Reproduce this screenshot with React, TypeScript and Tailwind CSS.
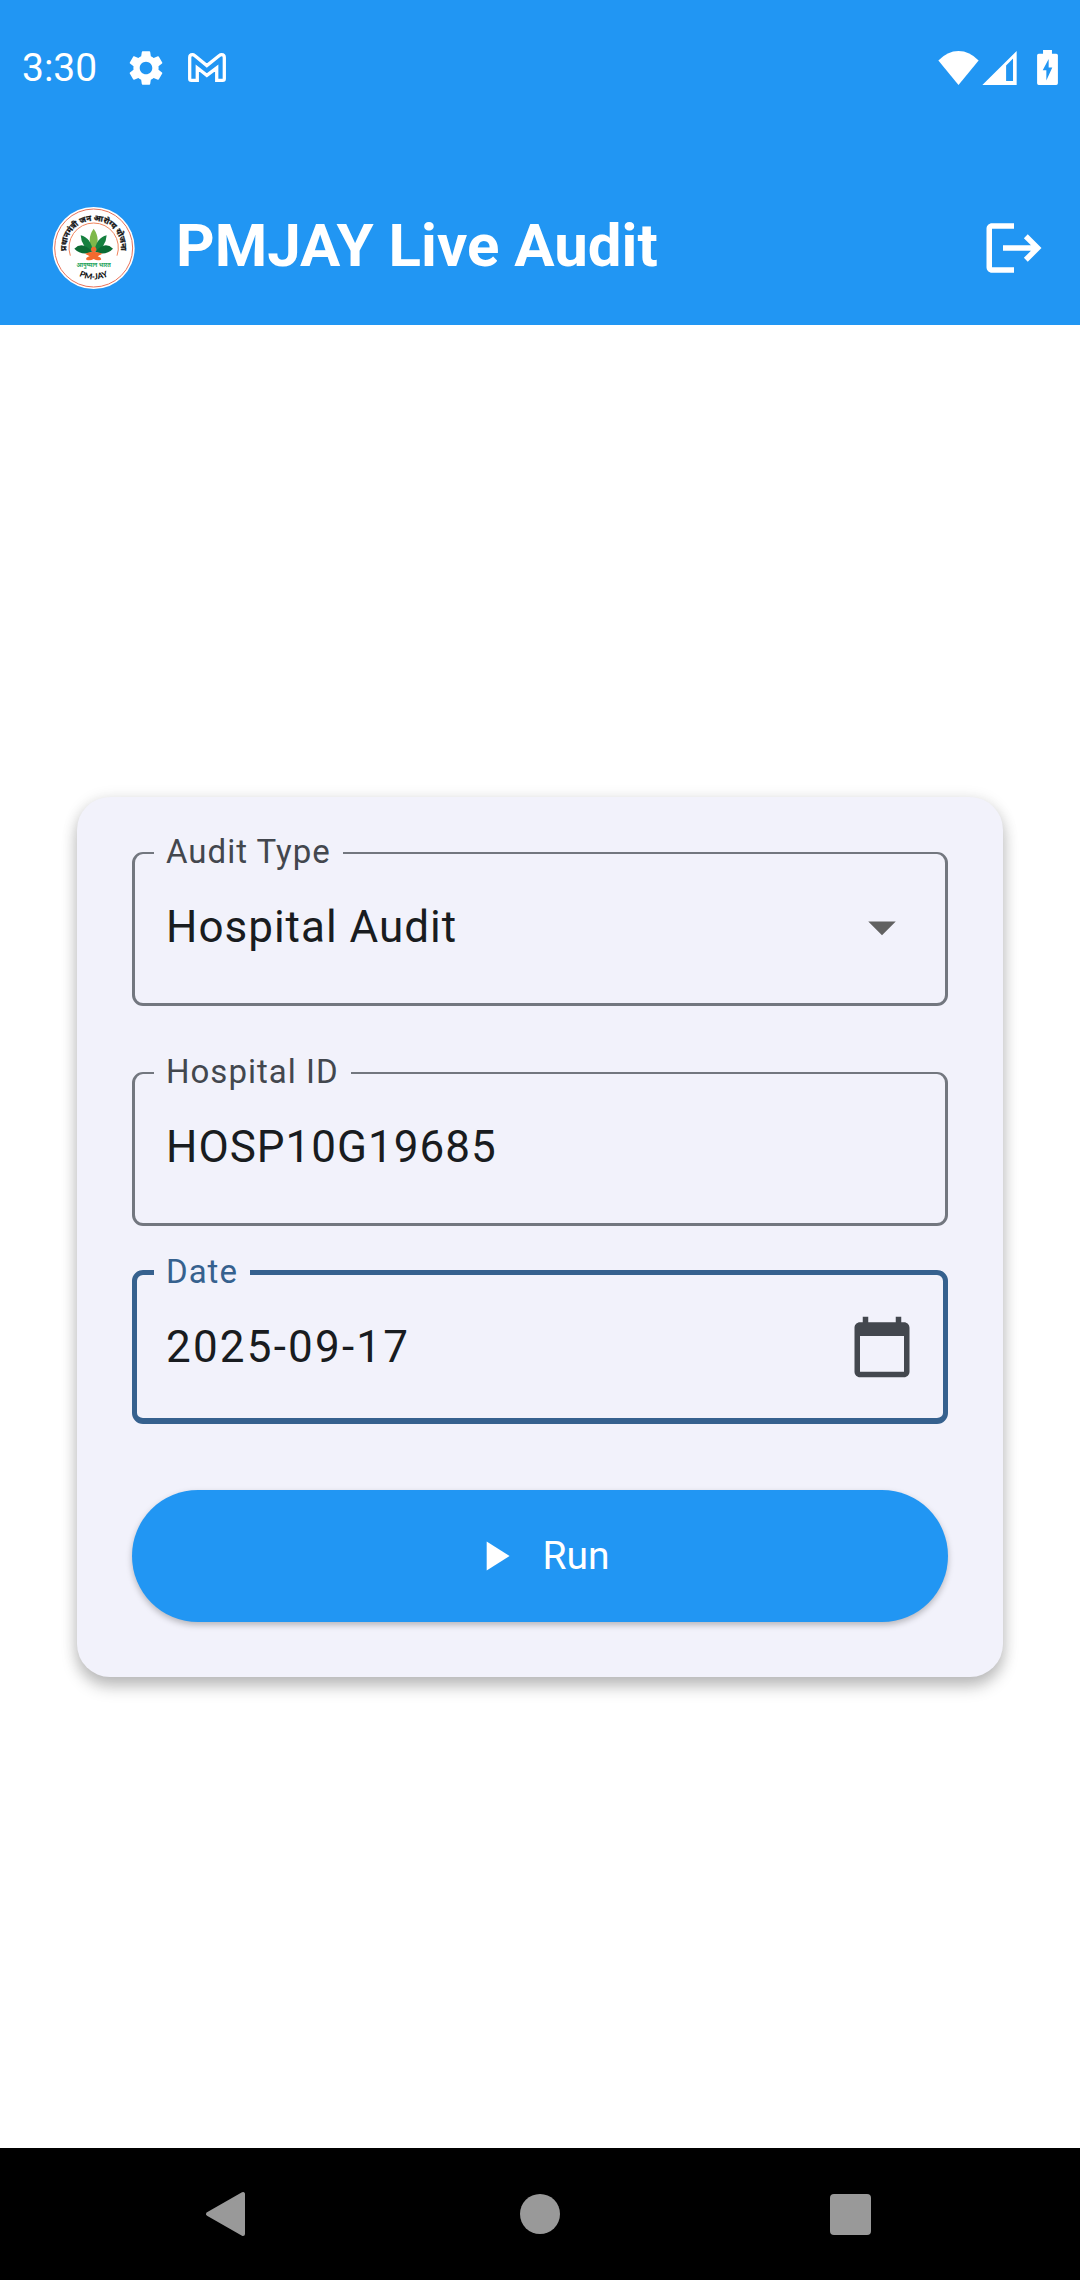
import { useState } from "react";
import type { ReactNode } from "react";
import { MdArrowDropDown, MdCalendarToday, MdLogout, MdPlayArrow, MdSettings } from "react-icons/md";

function GmailIcon() {
  return (
    <svg viewBox="0 0 115 88" className="h-[29px] w-[38px]" fill="none" stroke="currentColor" strokeWidth="10" aria-hidden="true">
      <path d="M5 78V14Q5 5 13 5Q17 5 20 8L57 38L95 8Q98 5 102 5Q110 5 110 14V78Q110 83 105 83H87V45L57 68L28 45V83H10Q5 83 5 78Z" />
    </svg>
  );
}

function WifiIcon() {
  return (
    <svg viewBox="0 0 122 103" className="h-[34px] w-[41px]" fill="currentColor" aria-hidden="true">
      <path d="M61 103L0 29Q27 0 61 0Q95 0 122 29Z" />
    </svg>
  );
}

function SignalIcon() {
  return (
    <svg viewBox="0 0 104 103" className="h-[34px] w-[35px]" fill="currentColor" aria-hidden="true">
      <path fillRule="evenodd" d="M104 0V103H0ZM72 44V91H93V23Z" />
    </svg>
  );
}

function BatteryIcon() {
  return (
    <svg viewBox="0 0 63 106" className="h-[35px] w-[21px]" fill="currentColor" aria-hidden="true">
      <path
        fillRule="evenodd"
        d="M18 0H45V11H58Q63 11 63 16V101Q63 106 58 106H5Q0 106 0 101V16Q0 11 5 11H18ZM35 27L17 61H28V92L46 53H35Z"
      />
    </svg>
  );
}

function PmjayLogo() {
  return (
    <svg viewBox="12 12 297 297" className="size-[99px] shrink-0" role="img" aria-label="PM-JAY">
      <defs>
        <path id="logo-top" d="M84 187A82 82 0 1 1 238 187" />
        <path id="logo-bottom" d="M70 190A97 97 0 0 0 252 190" />
      </defs>
      <circle cx="161" cy="159" r="123" fill="#fff" />
      <circle cx="161" cy="159" r="117" fill="none" stroke="#e8735a" strokeWidth="3" />
      <path d="M91 182A74 74 0 1 1 231 182" fill="none" stroke="#f0845c" strokeWidth="3" />
      <path d="M161 101Q185 135 161 168Q137 135 161 101Z" fill="#7fb84a" />
      <path d="M122 121Q153 128 159 171Q124 158 122 121Z" fill="#15803f" />
      <path d="M200 121Q169 128 163 171Q198 158 200 121Z" fill="#15803f" />
      <path d="M103 161Q128 137 157 171Q124 183 103 161Z" fill="#0b6b34" />
      <path d="M219 161Q194 137 165 171Q198 183 219 161Z" fill="#0b6b34" />
      <circle cx="161" cy="163" r="8" fill="#f26a2e" />
      <path d="M161 171Q176 170 187 176L173 184Q186 188 183 194Q172 199 161 192Q150 199 139 194Q136 188 149 184L135 176Q146 170 161 171Z" fill="#f26a2e" />
      <text x="161" y="217" textAnchor="middle" fontSize="17" fontWeight="700" fill="#1ea35a" fontFamily="'Noto Sans', sans-serif" lang="hi">
        आयुष्मान भारत
      </text>
      <text fontSize="24" fontWeight="700" fill="#151515" stroke="#151515" strokeWidth="1" fontFamily="'Noto Sans', sans-serif" lang="hi" textAnchor="middle">
        <textPath href="#logo-top" startOffset="50%">
          प्रधानमंत्री जन आरोग्य योजना
        </textPath>
      </text>
      <text fontSize="25" fontWeight="900" fill="#151515" fontFamily="Lato, sans-serif" textAnchor="middle">
        <textPath href="#logo-bottom" startOffset="50%">
          PM-JAY
        </textPath>
      </text>
    </svg>
  );
}

function StatusBar() {
  return (
    <div className="flex h-[135px] items-center justify-between px-[22px]">
      <div className="flex items-center">
        <span className="text-[39px] leading-[44px]">3:30</span>
        <MdSettings className="ml-7 size-[42px]" />
        <span className="ml-[21px]">
          <GmailIcon />
        </span>
      </div>
      <div className="flex items-center">
        <WifiIcon />
        <span className="ml-[3px]">
          <SignalIcon />
        </span>
        <span className="ml-5">
          <BatteryIcon />
        </span>
      </div>
    </div>
  );
}

function OutlinedField({ id, label, active = false, children }: { id: string; label: string; active?: boolean; children: ReactNode }) {
  return (
    <fieldset
      className={
        active
          ? "min-w-0 rounded-[11px] border-[5px] border-b-[6px] border-[#36618e] pr-7 pb-4 pl-[17px]"
          : "min-w-0 rounded-[11px] border-[3px] border-t-2 border-[#73777f] pr-[30px] pb-[21px] pl-[19px]"
      }
    >
      <legend className="px-3 pb-0.5">
        <label
          htmlFor={id}
          className={
            active
              ? "block text-[33px] leading-9 tracking-[1px] text-[#36618e]"
              : "block text-[33px] leading-9 tracking-[1px] text-[#43474e]"
          }
        >
          {label}
        </label>
      </legend>
      <div className="relative flex items-center pl-3">{children}</div>
    </fieldset>
  );
}

export default function App() {
  const [auditType, setAuditType] = useState("Hospital Audit");
  const [hospitalId, setHospitalId] = useState("HOSP10G19685");
  const [date, setDate] = useState("2025-09-17");

  return (
    <div className="flex min-h-screen flex-col bg-white font-['Roboto',sans-serif]">
      <header className="bg-[#2196f3] text-white">
        <StatusBar />
        <div className="mt-9 flex h-[154px] items-center pr-[33px] pl-11">
          <PmjayLogo />
          <h1 className="ml-[33px] flex-1 pb-1 text-[60px] leading-[72px] font-bold">PMJAY Live Audit</h1>
          <button type="button" aria-label="Log out">
            <MdLogout className="size-[66px]" />
          </button>
        </div>
      </header>

      <main className="flex flex-1 items-center px-[77px]">
        <form
          className="w-full rounded-[33px] bg-[#f2f2fb] px-[55px] pt-[37px] pb-[55px] shadow-[0_10px_16px_rgba(0,0,0,0.22),0_2px_16px_rgba(0,0,0,0.12)]"
          onSubmit={(e) => e.preventDefault()}
        >
          <OutlinedField id="audit-type" label="Audit Type">
            <select
              id="audit-type"
              value={auditType}
              onChange={(e) => setAuditType(e.target.value)}
              className="h-[110px] w-full appearance-none bg-transparent text-[44px] tracking-[1px] text-[#191c20] outline-none"
            >
              <option>Hospital Audit</option>
            </select>
            <MdArrowDropDown className="pointer-events-none absolute right-0 size-[66px] text-[#616161]" />
          </OutlinedField>

          <div className="mt-12">
            <OutlinedField id="hospital-id" label="Hospital ID">
              <input
                id="hospital-id"
                type="text"
                value={hospitalId}
                onChange={(e) => setHospitalId(e.target.value)}
                className="h-[110px] w-full bg-transparent text-[44px] tracking-[1px] text-[#191c20] outline-none"
              />
            </OutlinedField>
          </div>

          <div className="mt-7">
            <OutlinedField id="date" label="Date" active>
              <input
                id="date"
                type="text"
                value={date}
                onChange={(e) => setDate(e.target.value)}
                className="h-[110px] w-full min-w-0 bg-transparent text-[44px] tracking-wider text-[#191c20] outline-none"
              />
              <button type="button" aria-label="Choose date" className="shrink-0 text-[#43474e]">
                <MdCalendarToday className="size-[66px]" />
              </button>
            </OutlinedField>
          </div>

          <button
            type="submit"
            className="mt-[66px] flex h-[132px] w-full items-center justify-center gap-[22px] rounded-full bg-[#2196f3] text-[39px] leading-[44px] text-white shadow-[0_3px_6px_rgba(0,0,0,0.25)]"
          >
            <MdPlayArrow className="size-[50px]" />
            Run
          </button>
        </form>
      </main>

      <nav className="grid h-[132px] grid-cols-3 items-center justify-items-center bg-black px-[75px] text-[#999999]">
        <button type="button" aria-label="Back">
          <svg viewBox="0 0 56 56" className="size-14" fill="currentColor" stroke="currentColor" strokeWidth="4" strokeLinejoin="round">
            <path d="M6 28L41 8V48Z" />
          </svg>
        </button>
        <button type="button" aria-label="Home">
          <svg viewBox="0 0 56 56" className="size-14" fill="currentColor">
            <circle cx="28" cy="28" r="20" />
          </svg>
        </button>
        <button type="button" aria-label="Recent apps">
          <svg viewBox="0 0 56 56" className="size-14" fill="currentColor">
            <rect x="8" y="8" width="41" height="41" rx="4" />
          </svg>
        </button>
      </nav>
    </div>
  );
}
